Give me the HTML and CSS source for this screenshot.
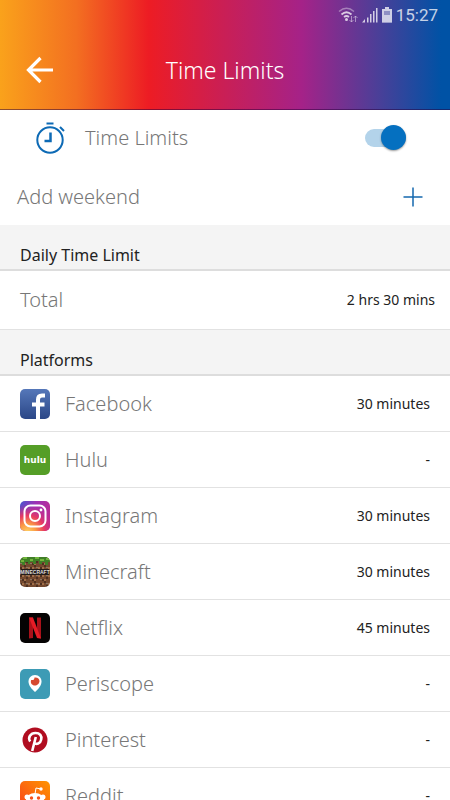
FILE: index.html
```html
<!DOCTYPE html>
<html lang="en">

<head>
  <meta charset="utf-8">
  <meta name="viewport" content="width=device-width, initial-scale=1">
  <title>Time Limits</title>
  <link rel="stylesheet" href="styles.css">
</head>

<body>
  <header class="header">
    <div class="status">
      <svg width="20" height="16" viewBox="0 0 20 16" fill="none" stroke="#fff">
        <path d="M1 4.500Q8.500-2 16 4.500" stroke-width="1.500" opacity=".5"/>
        <path d="M3.500 7.500Q8.500 3 13.500 7.500M6 10Q8.500 8 11 10" stroke-width="1.700"/>
        <circle cx="8.500" cy="12.500" r="1.500" fill="#fff" stroke="none"/>
        <path d="M13.500 9v6M11.500 13l2 2 2-2M17.500 15V9M15.500 11l2-2 2 2" opacity=".6"/>
      </svg>
      <svg width="16" height="16" viewBox="0 0 16 16" fill="#fff">
        <path d="M0 15.500L3 12v3.500zM5 10.500h1.500v5H5zM8 7h1.500v8.500H8zM11 4h1.500v11.500H11zM14 1h1.500v14.500H14z"/>
      </svg>
      <svg width="10" height="16" viewBox="0 0 10 16" fill="#fff">
        <path d="M3 0h4v2h3v13.500H0V2h3z" opacity=".55"/>
        <path d="M3 0h4v2h3v13.500H0V8h8V4H2v4H0V2h3z"/>
      </svg>
      <span>15:27</span>
    </div>
    <div class="titlebar">
      <a class="back" href="#" aria-label="Back">
        <svg width="28" height="28" viewBox="0 0 28 28" fill="none" stroke="#fff" stroke-width="3.200">
          <path d="M27 14H3M14.500 2L2.500 14l12 12"/>
        </svg>
      </a>
      <h1>Time Limits</h1>
    </div>
  </header>

  <main>
    <div class="row toggle">
      <svg width="30" height="32" viewBox="0 0 30 32" fill="none" stroke="#0d6ab5" stroke-width="2">
        <circle cx="14" cy="18" r="12.700"/>
        <path d="M10.500 1.500h7M24 5l4 4"/>
        <path d="M14.500 10.500V19H8.500" stroke-width="2.500"/>
      </svg>
      <label class="name" for="limits">Time Limits</label>
      <input type="checkbox" id="limits" class="switch" checked>
    </div>
    <div class="row weekend">
      <span class="name">Add weekend</span>
      <button type="button" class="add" aria-label="Add weekend">
        <svg width="20" height="20" viewBox="0 0 20 20" stroke="#1468ae" stroke-width="1.500">
          <path d="M10 .5v19M.5 10h19"/>
        </svg>
      </button>
    </div>

    <h2>Daily Time Limit</h2>
    <div class="row total">
      <span class="name">Total</span>
      <span class="value">2 hrs 30 mins</span>
    </div>

    <h2>Platforms</h2>
    <ul class="platforms">
      <li class="row">
        <svg class="icon" viewBox="0 0 30 30">
          <defs>
            <linearGradient id="fb" x2="0" y2="1">
              <stop stop-color="#5577b9"/>
              <stop offset="1" stop-color="#2b4787"/>
            </linearGradient>
          </defs>
          <rect width="30" height="30" rx="5" fill="url(#fb)"/>
          <path d="M18 30V10.500Q18 6.500 22 6.500H25M12 15.500H24.500" fill="none" stroke="#fff" stroke-width="4"/>
        </svg>
        <span class="name">Facebook</span>
        <span class="value">30 minutes</span>
      </li>
      <li class="row">
        <svg class="icon" viewBox="0 0 30 30">
          <rect width="30" height="30" rx="5" fill="#559e27"/>
          <text class="hulu" x="15" y="18" text-anchor="middle">hulu</text>
        </svg>
        <span class="name">Hulu</span>
        <span class="value">-</span>
      </li>
      <li class="row">
        <svg class="icon" viewBox="0 0 30 30">
          <defs>
            <linearGradient id="ig" x2="1" y2=".3">
              <stop stop-color="#4b55cf"/>
              <stop offset=".5" stop-color="#9c31b5"/>
              <stop offset="1" stop-color="#b82b96"/>
            </linearGradient>
            <radialGradient id="ig-glow" cx=".25" cy="1.050" r=".95">
              <stop stop-color="#ffd567"/>
              <stop offset=".3" stop-color="#fb9a44"/>
              <stop offset=".6" stop-color="#e73a62"/>
              <stop offset="1" stop-color="#c52b90" stop-opacity="0"/>
            </radialGradient>
          </defs>
          <rect width="30" height="30" rx="5" fill="url(#ig)"/>
          <rect width="30" height="30" rx="5" fill="url(#ig-glow)"/>
          <g fill="none" stroke="#fff" stroke-width="2">
            <rect x="4.500" y="4.500" width="21" height="21" rx="6"/>
            <circle cx="15" cy="15" r="5"/>
          </g>
          <circle cx="21" cy="9" r="1.400" fill="#fff"/>
        </svg>
        <span class="name">Instagram</span>
        <span class="value">30 minutes</span>
      </li>
      <li class="row">
        <svg class="icon" viewBox="0 0 30 30">
          <defs>
            <clipPath id="mc"><rect width="30" height="30" rx="5"/></clipPath>
            <pattern id="dirt" width="10" height="8" patternUnits="userSpaceOnUse">
              <path fill="#74492f" d="M0 0h10v8H0z"/>
              <path fill="#4d2f20" d="M0 2h2v2H0zM4 0h2v2H4zM6 4h2v2H6zM2 6h2v2H2z"/>
              <path fill="#a06f49" d="M2 2h2v2H2zM8 2h2v2H8zM4 6h2v2H4z"/>
              <path fill="#8a7765" d="M6 2h2v1H6zM0 6h2v1H0z"/>
            </pattern>
          </defs>
          <g clip-path="url(#mc)">
            <path fill="url(#dirt)" d="M0 0h30v30H0z"/>
            <path fill="#3f7f26" d="M0 0h30v5h-2v3h-3V5h-3v2h-3V4h-3v3h-3V5h-3v2H8V5H5v3H2V6H0z"/>
            <path fill="#70b53c" d="M3 0h4v2H3zM10 2h3v2h-3zM15 0h4v2h-4zM20 2h4v2h-4zM26 1h3v2h-3zM1 3h3v2H1z"/>
            <path fill="#241c19" d="M1 12h28v6H1z"/>
            <text class="minecraft" x="15" y="17" text-anchor="middle">MINECRAFT</text>
          </g>
        </svg>
        <span class="name">Minecraft</span>
        <span class="value">30 minutes</span>
      </li>
      <li class="row">
        <svg class="icon" viewBox="0 0 30 30">
          <rect width="30" height="30" rx="5" fill="#050303"/>
          <path fill="#a9111a" d="M9 4.500h4V25l-4 .5zM17 4.500h4v21l-4-.5z"/>
          <path fill="#e51c26" d="M9 4.500h4l8 21-4-.5z"/>
        </svg>
        <span class="name">Netflix</span>
        <span class="value">45 minutes</span>
      </li>
      <li class="row">
        <svg class="icon" viewBox="0 0 30 30">
          <rect width="30" height="30" rx="5" fill="#3d9bb5"/>
          <path fill="#fff" d="M15 6c4 0 6.500 3 6.500 6.500 0 4-3.500 8-6.500 10.500-3-2.500-6.500-6.500-6.500-10.500C8.500 9 11 6 15 6z"/>
          <path fill="#d6492f" d="M14.500 8.500q0 3-3.300 2.500c-1.200 3 .8 5.500 3.800 5.500s4.500-2.500 4.500-4.500-2-4-5-3.500z"/>
        </svg>
        <span class="name">Periscope</span>
        <span class="value">-</span>
      </li>
      <li class="row">
        <svg class="icon" viewBox="0 0 30 30">
          <circle cx="15" cy="15" r="12.500" fill="#b00d20"/>
          <path d="M10.200 16.500C7.500 12.500 10.500 8 15.500 8c4.500 0 6.500 3 5.700 6.500-.7 4-5 5.700-7.200 3M15.800 12l-3.600 14" fill="none" stroke="#fff" stroke-width="2.600"/>
        </svg>
        <span class="name">Pinterest</span>
        <span class="value">-</span>
      </li>
      <li class="row">
        <svg class="icon" viewBox="0 0 30 30">
          <defs>
            <linearGradient id="rd" x1="1" x2="0" y2="1">
              <stop stop-color="#ff9500"/>
              <stop offset="1" stop-color="#f9401a"/>
            </linearGradient>
          </defs>
          <rect width="30" height="30" rx="5" fill="url(#rd)"/>
          <path d="M15 13l1-6 5 1" fill="none" stroke="#fff"/>
          <g fill="#fff">
            <circle cx="21" cy="8" r="1.700"/>
            <circle cx="7" cy="16" r="2.500"/>
            <circle cx="23" cy="16" r="2.500"/>
            <ellipse cx="15" cy="18.500" rx="9" ry="6.500"/>
          </g>
          <circle cx="11.500" cy="17" r="1.700" fill="#f9501a"/>
          <circle cx="18.500" cy="17" r="1.700" fill="#f9501a"/>
          <path d="M11 21q4 3 8 0" fill="none" stroke="#f9501a"/>
        </svg>
        <span class="name">Reddit</span>
        <span class="value">-</span>
      </li>
    </ul>
  </main>
</body>

</html>
```
FILE: styles.css
```css
* {
  box-sizing: border-box;
}

body {
  display: flex;
  flex-direction: column;
  height: 100vh;
  margin: 0;
  font-family: "Noto Sans", sans-serif;
  color: #222;
  background: #fff;
}

.header {
  flex: none;
  color: #fff;
  background: linear-gradient(90deg, #faa21b 0%, #f36f21 17%, #ed1c24 33%, #a52288 67%, #4b3f98 84%, #0052a5 98%);
  border-bottom: 1px solid rgba(40, 0, 60, .5);
}

.status {
  display: flex;
  align-items: center;
  justify-content: flex-end;
  gap: 4px;
  height: 30px;
  padding-right: 12px;
  font: 17px Roboto, sans-serif;
  opacity: .75;
}

.titlebar {
  display: grid;
  grid-template-columns: 28px 1fr 28px;
  align-items: center;
  height: 79px;
  padding: 0 26px;
}

.back {
  display: flex;
}

h1 {
  margin: 0;
  font-size: 23px;
  font-weight: 300;
  text-align: center;
}

main {
  flex: 1;
  min-height: 0;
  overflow-y: auto;
  scrollbar-width: none;
}

.row {
  display: flex;
  align-items: center;
  height: 56px;
  padding: 0 20px;
}

.name {
  flex: 1;
  font-size: 20px;
  font-weight: 300;
  line-height: 24px;
  color: #777;
}

.value {
  font-size: 14px;
  line-height: 24px;
}

.toggle {
  gap: 19px;
  height: 55px;
  padding: 0 44px 0 36px;
}

.weekend {
  height: 60px;
  padding: 4px 27px 0 17px;
}

/* on/off slider drawn from the tick box */
.switch {
  display: flex;
  align-items: center;
  justify-content: flex-end;
  width: 41px;
  height: 18px;
  margin: 0;
  appearance: none;
  border-radius: 9px;
  background: #b3d3ea;
  cursor: pointer;
}

.switch::before {
  content: "";
  width: 25px;
  height: 25px;
  border-radius: 50%;
  background: #0570c0;
  box-shadow: 0 1px 2px rgba(0, 0, 0, .4);
}

.switch:not(:checked) {
  justify-content: flex-start;
}

.add {
  display: flex;
  padding: 0;
  border: 0;
  background: none;
  cursor: pointer;
}

h2 {
  display: flex;
  align-items: flex-end;
  height: 46px;
  margin: 0;
  padding: 0 20px 3px;
  font-size: 16px;
  font-weight: 400;
  background: #f4f4f4;
  border-bottom: 2px solid #ddd;
}

.total {
  height: 59px;
  padding-right: 15px;
  border-bottom: 1px solid #e2e2e2;
}

.platforms {
  margin: 0;
  padding: 0;
  list-style: none;
}

.platforms .row {
  gap: 15px;
  border-bottom: 1px solid #e2e2e2;
}

.icon {
  width: 30px;
  height: 30px;
}

.hulu {
  font: bold 9px "DejaVu Sans", sans-serif;
  fill: #fff;
}

.minecraft {
  font: bold 5px "Liberation Sans", sans-serif;
  fill: #ddd;
}
```
